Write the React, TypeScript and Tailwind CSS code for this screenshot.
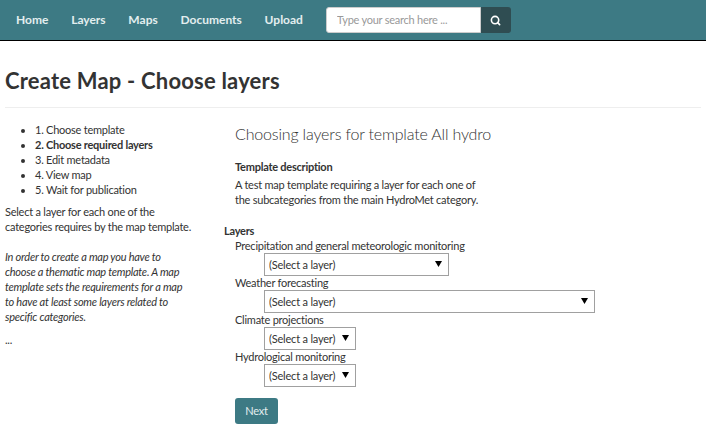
import React from 'react';
import { Search } from 'lucide-react';

const navItems = ['Home', 'Layers', 'Maps', 'Documents', 'Upload'];

const steps = [
  { label: '1. Choose template' },
  { label: '2. Choose required layers', active: true },
  { label: '3. Edit metadata' },
  { label: '4. View map' },
  { label: '5. Wait for publication' },
];

const layerFields = [
  { label: 'Precipitation and general meteorologic monitoring', width: 'w-[185px]' },
  { label: 'Weather forecasting', width: 'w-[331px]' },
  { label: 'Climate projections', width: 'w-[92px]' },
  { label: 'Hydrological monitoring', width: 'w-[92px]' },
];

function LayerSelect({ width }: { width: string }) {
  return (
    <div className={`relative ml-[29px] h-[23px] ${width}`}>
      <select className="h-full w-full appearance-none border border-[#a0a0a0] bg-white pl-1 text-[11px] tracking-[-0.2px] text-[#333] outline-none">
        <option>(Select a layer)</option>
      </select>
      <svg className="pointer-events-none absolute right-[7px] top-[8px] h-[6px] w-[7px]" viewBox="0 0 7 6">
        <path d="M0 0h7L3.5 6z" fill="#000" />
      </svg>
    </div>
  );
}

export default function App() {
  return (
    <div className="h-[442px] w-[706px] overflow-hidden bg-white font-['Lato','Noto_Sans',sans-serif] text-[11px] tracking-[-0.24px] text-[#333]">
      <nav className="flex h-[41px] items-center border-b border-black bg-[#3d7a84] pl-4">
        <ul className="flex gap-[22.75px] text-xs font-bold tracking-normal text-[#e3eeef]">
          {navItems.map((item) => (
            <li key={item}>{item}</li>
          ))}
        </ul>
        <form className="ml-[23px] flex h-[26px] w-[185px]">
          <input
            className="h-full w-[155px] rounded-l-[3px] border border-[#ccc] bg-white px-[10px] pb-[2px] text-[11px] text-[#333] outline-none placeholder:text-[#999]"
            placeholder="Type your search here ..."
          />
          <button type="button" className="flex h-full w-[30px] items-center justify-center rounded-r-[3px] bg-[#2f4d52] text-white">
            <Search size={11} strokeWidth={3.5} />
          </button>
        </form>
      </nav>

      <header className="mx-[5px] mt-[25px] border-b border-[#eee] pb-[12px]">
        <h1 className="text-[22px] leading-[29px] font-bold tracking-[0.2px] text-[#333]">Create Map - Choose layers</h1>
      </header>

      <main className="mt-[14px] flex">
        <aside className="ml-[5px] w-[200px] leading-[15px]">
          <ul className="list-disc pl-[30px]">
            {steps.map((step) => (
              <li key={step.label} className={step.active ? 'font-bold' : ''}>
                {step.label}
              </li>
            ))}
          </ul>
          <p className="mt-[7px]">
            Select a layer for each one of the
            <br />
            categories requires by the map template.
          </p>
          <p className="mt-[15px] italic">
            In order to create a map you have to
            <br />
            choose a thematic map template. A map
            <br />
            template sets the requirements for a map
            <br />
            to have at least some layers related to
            <br />
            specific categories.
          </p>
          <p className="mt-[8px]">...</p>
        </aside>

        <section className="ml-[30px] flex-1">
          <h2 className="mt-[2px] text-base leading-[20px] font-light tracking-[-0.17px] text-[#333]">Choosing layers for template All hydro</h2>
          <h3 className="mt-[15px] leading-[15px] font-bold">Template description</h3>
          <p className="mt-[3px] leading-[15px]">
            A test map template requiring a layer for each one of
            <br />
            the subcategories from the main HydroMet category.
          </p>
          <div className="-ml-[11px] mt-[16px] leading-[15px] font-bold">Layers</div>
          <div className="mt-[1px] flex flex-col leading-[14px]">
            {layerFields.map((field) => (
              <div key={field.label}>
                <label className="block h-[14px]">{field.label}</label>
                <LayerSelect width={field.width} />
              </div>
            ))}
          </div>
          <button type="button" className="mt-[11px] h-[26px] w-[43px] rounded-[3px] bg-[#3d7a84] text-[11px] text-[#e3eeef]">
            Next
          </button>
        </section>
      </main>
    </div>
  );
}
